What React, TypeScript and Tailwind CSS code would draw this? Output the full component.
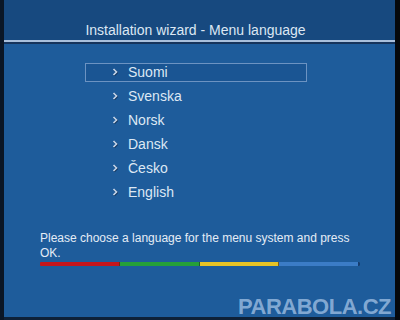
const languages = ['Suomi', 'Svenska', 'Norsk', 'Dansk', 'Česko', 'English'];

function Chevron() {
  return (
    <svg width="6" height="8" viewBox="0 0 6 8" className="shrink-0">
      <path d="M1.5 1 L4.5 4 L1.5 7" fill="none" stroke="#0d2c52" strokeWidth="1.8" transform="translate(0.6 0.6)" />
      <path d="M1.5 1 L4.5 4 L1.5 7" fill="none" stroke="#c4d4e8" strokeWidth="1.7" />
    </svg>
  );
}

export default function App() {
  return (
    <div
      className="w-[400px] h-[320px] bg-black flex overflow-hidden"
      style={{ fontFamily: '"Liberation Sans", Arial, sans-serif' }}
    >
      <div className="w-[4px] shrink-0 bg-[#0a1626]" />
      <div className="flex-1 min-w-0 flex flex-col relative">
        {/* header */}
        <div className="h-[40px] bg-[#17497f] flex items-end justify-center pb-[1px] pr-[8px]">
          <span className="text-[14px] leading-[17px] text-[#dce7f3]">Installation wizard - Menu language</span>
        </div>
        <div className="h-[2px] bg-[#a9c0dc]" />
        <div className="h-[2px] bg-[#16345c]" />

        {/* body */}
        <div className="flex-1 bg-[#1e5c9b] flex flex-col pt-[16px] pl-[36px] pr-[20px]">
          <div className="flex flex-col">
            {languages.map((lang, i) => (
              <div key={lang} className="h-[24px] flex items-center">
                <div
                  className={
                    'ml-[45px] w-[222px] h-[19px] flex items-center pl-[26px] gap-[10px] ' +
                    (i === 0 ? 'border border-[#6c93c2] bg-[#1a5593]' : 'border border-transparent')
                  }
                >
                  <Chevron />
                  <span className="text-[14px] leading-[17px] text-[#dde8f4]">{lang}</span>
                </div>
              </div>
            ))}
          </div>

          <p className="mt-[27px] text-[12px] leading-[15px] text-[#e4ecf6] w-[330px]">
            Please choose a language for the menu system and press OK.
          </p>

          <div className="mt-[1px] w-[320px] h-[4px] flex rounded-[1px] overflow-hidden">
            <div className="flex-1 bg-[#c4161c] border-r border-[#6e2a10]" />
            <div className="flex-1 bg-[#25a039] border-r border-[#1d5e2a]" />
            <div className="flex-1 bg-[#e7c325] border-r border-[#7a5b18]" />
            <div className="flex-1 bg-[#3b7cc6] border-r-2 border-[#163d6e]" />
          </div>
        </div>
        <div className="h-[3px] bg-[#0e2138]" />

        <span className="absolute right-[4px] bottom-[2px] text-[22px] leading-[22px] font-bold tracking-[-0.5px] text-[#90b3da]/90">
          PARABOLA.CZ
        </span>
      </div>
      <div className="w-[5px] shrink-0 bg-[#05080c]" />
    </div>
  );
}
